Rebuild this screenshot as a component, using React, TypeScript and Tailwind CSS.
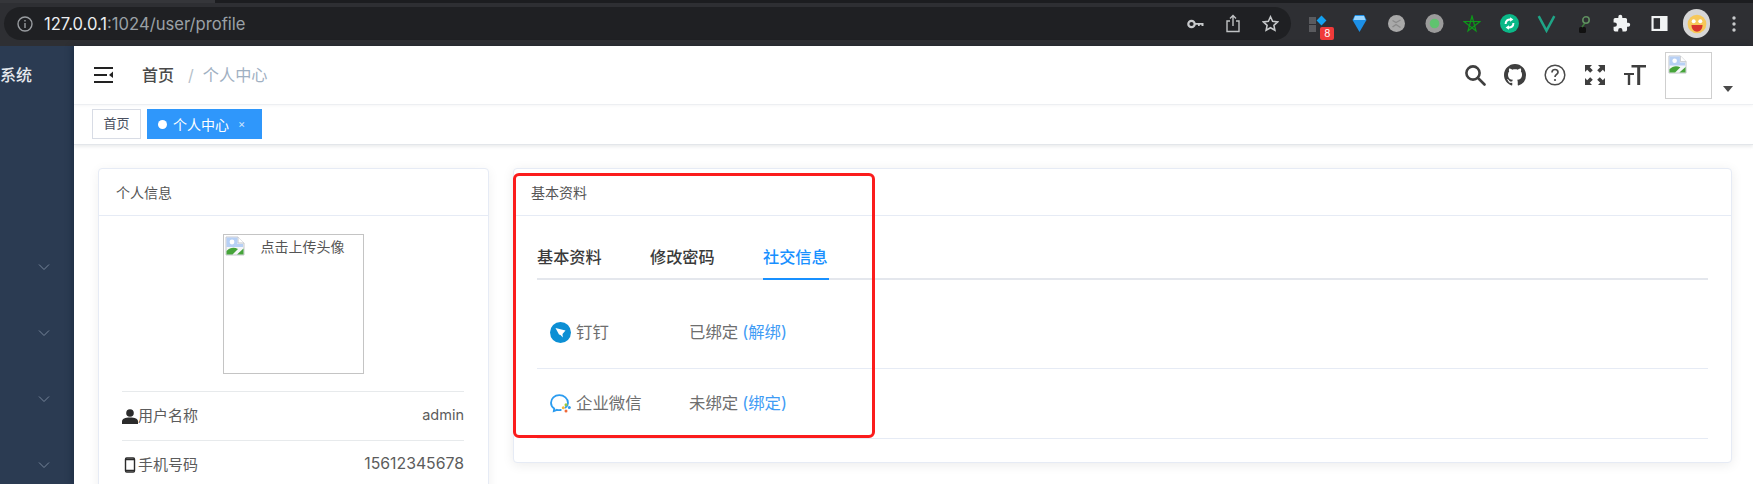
import React from "react";

function Chevron() {
  return (
    <div className="flex h-[66px] items-center justify-end pr-[23px]">
      <svg width="14" height="8" viewBox="0 0 14 8" fill="none" stroke="#76859a" strokeWidth="1">
        <path d="M2 1.5 L7 6.5 L12 1.5" />
      </svg>
    </div>
  );
}

function BrokenImage({ size = 20 }: { size?: number }) {
  return (
    <svg width={size} height={size} viewBox="0 0 20 20">
      <path d="M1 1 H13 L19 7 V19 H1 Z" fill="#f4f6f8" stroke="#c4c7cc" strokeWidth="1" />
      <path d="M13 1 V7 H19" fill="#ffffff" stroke="#c4c7cc" strokeWidth="1" />
      <path d="M1.5 1.5 H12.5 V8 H18 V11 H1.5 Z" fill="#b7d0f5" />
      <circle cx="7" cy="6" r="2.4" fill="#ffffff" />
      <path d="M1.5 18.5 V15 C5 11.5 9 11 13 13 L7.5 18.5 Z" fill="#46a43a" />
      <path d="M12 18.5 L18.5 12.5 V18.5 Z" fill="#46a43a" />
    </svg>
  );
}

function ExtCell({ children }: { children: React.ReactNode }) {
  return <div className="flex h-6 w-[37.5px] shrink-0 items-center justify-center">{children}</div>;
}

function ChromeBar() {
  return (
    <div className="h-[46px] shrink-0 bg-[#2e2f33]">
      <div className="flex h-[3px]">
        <div className="w-[215px] bg-[#35363a]" />
        <div className="flex-1 bg-[#1c1d20]" />
      </div>
      <div className="flex h-[43px] items-center pb-[2px]">
        <div className="ml-[4px] flex h-[33px] w-[1287px] shrink-0 items-center rounded-full bg-[#1f2023] pl-[13px] pr-[12px]">
          <svg width="16" height="16" viewBox="0 0 16 16" fill="none" stroke="#9a9da1" strokeWidth="1.4">
            <circle cx="8" cy="8" r="7" />
            <path d="M8 7 V12 M8 4 V5.6" />
          </svg>
          <div className="ml-[11px] mt-[1px] whitespace-nowrap text-[16.6px] text-[#9aa0a6]">
            <span className="text-[#eceef0]">127.0.0.1</span>:1024/user/profile
          </div>
          <div className="ml-auto flex items-center gap-[21px]">
            <svg width="17" height="12" viewBox="0 0 17 12" fill="none">
              <circle cx="4.5" cy="6" r="3.2" stroke="#c8cacc" strokeWidth="2.2" />
              <path d="M8 5 H16.5 V8 H14.5 V6.8 H12.8 V8 H11 V6.8 H8 Z" fill="#c8cacc" />
            </svg>
            <svg width="16" height="19" viewBox="0 0 16 19" fill="none" stroke="#c0c2c4" strokeWidth="1.4">
              <path d="M5 7 H2 V17.5 H14 V7 H11" />
              <path d="M8 12 V1.5 M5 4.5 L8 1.5 L11 4.5" />
            </svg>
            <svg width="17" height="17" viewBox="0 0 24 24" fill="none" stroke="#c6c8ca" strokeWidth="2.2">
              <path d="M12 2.5 L15 9 L22 9.8 L16.8 14.6 L18.2 21.5 L12 18 L5.8 21.5 L7.2 14.6 L2 9.8 L9 9 Z" />
            </svg>
          </div>
        </div>
        <div className="ml-[12px] flex items-center">
          <ExtCell>
            <div className="relative h-6 w-[25px]">
              <div className="absolute left-0 top-[5px] h-[7px] w-[7px] bg-[#5a5b5f]" />
              <div className="absolute left-0 top-[13px] h-[7px] w-[7px] bg-[#5a5b5f]" />
              <div className="absolute left-[9px] top-[5px] h-[7px] w-[7px] rotate-45 bg-[#13a0f0]" />
              <div className="absolute left-[11px] top-[15px] flex h-[13px] w-[14px] items-center justify-center rounded-[2px] bg-[#f03a3a] text-[10px] leading-none text-white">
                8
              </div>
            </div>
          </ExtCell>
          <ExtCell>
            <svg width="15" height="19" viewBox="0 0 15 19">
              <path d="M3 1 H12 L14.5 6 L7.5 18 L0.5 6 Z" fill="#1c8fe6" />
              <path d="M3 2 H12 L13.5 6 H1.5 Z" fill="#9ad6ff" />
            </svg>
          </ExtCell>
          <ExtCell>
            <svg width="17" height="17" viewBox="0 0 17 17">
              <circle cx="8.5" cy="8.5" r="8.5" fill="#a9a9a9" />
              <path d="M4.5 5.5 L8 7.5 L12.5 5 M4.5 12 L8 9.5 L12.5 12.5" stroke="#8a8a8a" strokeWidth="1.4" fill="none" />
            </svg>
          </ExtCell>
          <ExtCell>
            <svg width="19" height="19" viewBox="0 0 18 19">
              <ellipse cx="9" cy="9.5" rx="9" ry="9.5" fill="#9b9b9b" />
              <circle cx="9" cy="9.5" r="4.8" fill="#5fc36f" />
            </svg>
          </ExtCell>
          <ExtCell>
            <svg width="18" height="18" viewBox="0 0 18 18" fill="none" stroke="#0d9a1a" strokeWidth="1.2">
              <path d="M9 1 L13 16 L1 6.5 H17 L5 16 Z" />
            </svg>
          </ExtCell>
          <ExtCell>
            <svg width="19" height="19" viewBox="0 0 17 17">
              <circle cx="8.5" cy="8.5" r="8.5" fill="#0bb888" />
              <path d="M5 9 C5 6 7 4.5 10 5 M12 8 C12 11 10 12.5 7 12" stroke="#ffffff" strokeWidth="1.8" fill="none" />
              <path d="M9 2.8 L12 5 L9 7 Z M8 10 L5 12 L8 14.2 Z" fill="#ffffff" />
            </svg>
          </ExtCell>
          <ExtCell>
            <svg width="19" height="18" viewBox="0 0 17 16" fill="none" stroke="#1fa587" strokeWidth="2.2">
              <path d="M1.5 1 L8.5 14 L15.5 1" />
            </svg>
          </ExtCell>
          <ExtCell>
            <svg width="12" height="18" viewBox="0 0 12 18">
              <rect x="1" y="12" width="7" height="6" rx="1.5" fill="#111" />
              <path d="M4 12 L7 8" stroke="#3c7a3c" strokeWidth="1.5" />
              <circle cx="8" cy="5" r="3.2" fill="none" stroke="#5f8f5f" strokeWidth="1.6" />
            </svg>
          </ExtCell>
          <ExtCell>
            <svg width="19" height="19" viewBox="0 0 24 24" fill="#f1f3f4">
              <path d="M20.5 11H19V7a2 2 0 0 0-2-2h-4V3.5a2.5 2.5 0 0 0-5 0V5H4a2 2 0 0 0-2 2v3.8h1.5a2.7 2.7 0 0 1 0 5.4H2V20a2 2 0 0 0 2 2h3.8v-1.5a2.7 2.7 0 0 1 5.4 0V22H17a2 2 0 0 0 2-2v-4h1.5a2.5 2.5 0 0 0 0-5z" />
            </svg>
          </ExtCell>
          <ExtCell>
            <svg width="17" height="15" viewBox="0 0 15 14">
              <rect x="0" y="0" width="15" height="14" fill="#f1f3f4" />
              <rect x="2" y="2" width="6" height="10" fill="#2e2f33" />
            </svg>
          </ExtCell>
          <ExtCell>
            <div className="flex h-[29px] w-[27px] shrink-0 items-center justify-center rounded-full bg-[#d6d6d6]">
              <svg width="22" height="22" viewBox="0 0 20 20">
                <circle cx="10" cy="10" r="8.5" fill="#f6c85a" />
                <circle cx="7" cy="7.5" r="1.8" fill="#fff" />
                <circle cx="13" cy="7.5" r="1.8" fill="#fff" />
                <path d="M5 11 H15 C15 15 12.5 17 10 17 C7.5 17 5 15 5 11 Z" fill="#d8342e" />
              </svg>
            </div>
          </ExtCell>
          <ExtCell>
            <svg width="4" height="16" viewBox="0 0 4 16" fill="#c8cacc">
              <circle cx="2" cy="2" r="1.7" />
              <circle cx="2" cy="8" r="1.7" />
              <circle cx="2" cy="14" r="1.7" />
            </svg>
          </ExtCell>
        </div>
      </div>
    </div>
  );
}

function Sidebar() {
  return (
    <div className="w-[74px] shrink-0 overflow-hidden bg-[#2b3b52]">
      <div className="flex h-[58px] items-center text-[16px] font-medium leading-none text-[#e6e9ee]">系统</div>
      <div className="pt-[130px]">
        <Chevron />
        <Chevron />
        <Chevron />
        <Chevron />
      </div>
    </div>
  );
}

function NavBar() {
  return (
    <div className="flex h-[59px] shrink-0 items-center border-b border-[#eef0f3] pl-[20px] shadow-[0_1px_3px_rgba(0,21,41,0.04)]">
      <svg width="20" height="19" viewBox="0 0 20 19" fill="#222">
        <rect x="0" y="1" width="19" height="2" />
        <rect x="0" y="8" width="13" height="2" />
        <rect x="0" y="15" width="19" height="2" />
        <path d="M19 5.5 V12 L15 9 Z" />
      </svg>
      <div className="ml-[28px] text-[16px] font-medium text-[#4a4a4a]">首页</div>
      <div className="ml-[14px] text-[16px] text-[#b6bfca]">/</div>
      <div className="ml-[9px] text-[16.2px] text-[#9fb0c2]">个人中心</div>
      <div className="ml-auto flex items-center pr-[20px]">
        <svg width="22" height="22" viewBox="0 0 22 22" fill="none" stroke="#3f3f3f" strokeWidth="2.6">
          <circle cx="9" cy="9" r="6.6" />
          <path d="M14 14 L20.5 20.5" strokeLinecap="round" />
        </svg>
        <svg width="22" height="22" viewBox="0 0 16 16" fill="#3f3f3f" className="ml-[18px]">
          <path d="M8 0C3.58 0 0 3.58 0 8c0 3.54 2.29 6.53 5.47 7.59.4.07.55-.17.55-.38 0-.19-.01-.82-.01-1.49-2.01.37-2.53-.49-2.69-.94-.09-.23-.48-.94-.82-1.13-.28-.15-.68-.52-.01-.53.63-.01 1.08.58 1.23.82.72 1.21 1.87.87 2.33.66.07-.52.28-.87.51-1.07-1.78-.2-3.64-.89-3.64-3.95 0-.87.31-1.59.82-2.15-.08-.2-.36-1.02.08-2.12 0 0 .67-.21 2.2.82.64-.18 1.32-.27 2-.27.68 0 1.36.09 2 .27 1.53-1.04 2.2-.82 2.2-.82.44 1.1.16 1.92.08 2.12.51.56.82 1.27.82 2.15 0 3.07-1.87 3.75-3.65 3.95.29.25.54.73.54 1.48 0 1.07-.01 1.93-.01 2.2 0 .21.15.46.55.38A8.013 8.013 0 0016 8c0-4.42-3.58-8-8-8z" />
        </svg>
        <svg width="22" height="22" viewBox="0 0 22 22" fill="none" stroke="#4a4a4a" strokeWidth="1.5" className="ml-[18px]">
          <circle cx="11" cy="11" r="9.8" />
          <path d="M8 8.5 C8 6.5 9.5 5.5 11 5.5 C12.8 5.5 14 6.7 14 8.2 C14 10.3 11 10.6 11 13" strokeWidth="1.7" />
          <circle cx="11" cy="16" r="1.1" fill="#4a4a4a" stroke="none" />
        </svg>
        <svg width="20" height="20" viewBox="0 0 20 20" fill="#3f3f3f" className="ml-[19px]">
          <path d="M0 0 H7 L4.8 2.2 L7.8 5.2 L5.2 7.8 L2.2 4.8 L0 7 Z" />
          <path d="M20 0 V7 L17.8 4.8 L14.8 7.8 L12.2 5.2 L15.2 2.2 L13 0 Z" />
          <path d="M0 20 V13 L2.2 15.2 L5.2 12.2 L7.8 14.8 L4.8 17.8 L7 20 Z" />
          <path d="M20 20 H13 L15.2 17.8 L12.2 14.8 L14.8 12.2 L17.8 15.2 L20 13 Z" />
        </svg>
        <svg width="22" height="22" viewBox="0 0 22 22" fill="#3f3f3f" className="ml-[19px]">
          <path d="M7.5 1 H22 V3.6 H16.2 V21 H13.2 V3.6 H7.5 Z" />
          <path d="M0 9 H10 V11 H6.2 V21 H3.8 V11 H0 Z" />
        </svg>
        <div className="ml-[19px] h-[47px] w-[47px] shrink-0 border border-[#cfcfcf] p-[2px]">
          <BrokenImage size={19} />
        </div>
        <svg width="10" height="6" viewBox="0 0 10 6" fill="#4a4a4a" className="ml-[11px] mt-[28px]">
          <path d="M0 0 H10 L5 6 Z" />
        </svg>
      </div>
    </div>
  );
}

function TagBar() {
  return (
    <div className="flex h-[40px] shrink-0 items-start gap-[6px] border-b border-[#e3e6ea] pl-[18px] pt-[4px] shadow-[0_2px_3px_rgba(0,21,41,0.08)]">
      <div className="flex h-[30px] w-[49px] items-center justify-center border border-[#d8dce5] text-[13px] text-[#495060]">首页</div>
      <div className="flex h-[30px] w-[115px] items-center bg-[#2f97fb] pl-[11px] text-[14px] text-white">
        <span className="h-[9px] w-[9px] rounded-full bg-white" />
        <span className="ml-[6px]">个人中心</span>
        <span className="ml-[9px] text-[11px] leading-none text-[#cfe6fd]">×</span>
      </div>
    </div>
  );
}

function CardHeader({ title }: { title: string }) {
  return (
    <div className="flex h-[46px] items-center text-[14px] text-[#555]">{title}</div>
  );
}

function InfoRow({ icon, label, value, valueClass }: { icon: React.ReactNode; label: string; value: string; valueClass: string }) {
  return (
    <div className="flex h-[49px] items-center justify-between border-t border-[#e7eaec] text-[#5c5c5c]">
      <div className="flex items-center text-[15px]">
        {icon}
        <span>{label}</span>
      </div>
      <span className={`-mt-[2px] ${valueClass}`}>{value}</span>
    </div>
  );
}

function ProfileCard() {
  return (
    <div className="h-[400px] w-[391px] shrink-0 rounded-[4px] border border-[#e6ebf5] bg-white shadow-[0_2px_12px_rgba(0,0,0,0.06)]">
      <div className="pl-[17px]">
        <CardHeader title="个人信息" />
      </div>
      <div className="border-t border-[#e6ebf5] pl-[23px] pr-[24px] pt-[18px]">
        <div className="mx-auto h-[140px] w-[141px] border border-[#c4c4c4]">
          <div className="flex items-start">
            <div className="ml-[1px] mt-[1px]">
              <BrokenImage size={20} />
            </div>
            <span className="ml-[16px] mt-[2px] whitespace-nowrap text-[14px] leading-[20px] text-[#555]">点击上传头像</span>
          </div>
        </div>
        <div className="mt-[17px]">
          <InfoRow
            label="用户名称"
            value="admin"
            valueClass="text-[14.5px]"
            icon={
              <svg width="16" height="15" viewBox="0 0 16 15" fill="#2b2b2b">
                <circle cx="8" cy="4" r="3.8" />
                <path d="M0 15 V12.5 C0 10 3 8.6 8 8.6 C13 8.6 16 10 16 12.5 V15 Z" />
              </svg>
            }
          />
          <InfoRow
            label="手机号码"
            value="15612345678"
            valueClass="text-[15.8px]"
            icon={
              <svg width="16" height="16" viewBox="0 0 16 16" fill="none" stroke="#2b2b2b" strokeWidth="1.4">
                <rect x="3.5" y="1" width="9" height="14" rx="1.2" />
                <path d="M3.5 13.5 H12.5 M3.5 2.5 H12.5" strokeWidth="1.6" />
              </svg>
            }
          />
        </div>
      </div>
    </div>
  );
}

function DingIcon() {
  return (
    <svg width="21" height="21" viewBox="0 0 21 21" className="shrink-0">
      <circle cx="10.5" cy="10.5" r="10.5" fill="#0c8fd4" />
      <path d="M5.5 6 L15.5 8.5 L12.5 12 L12.8 15.5 L10.5 13 L9 12.5 Z" fill="#ffffff" />
    </svg>
  );
}

function WeComIcon() {
  return (
    <svg width="21" height="19" viewBox="0 0 21 19" fill="none" className="shrink-0">
      <path d="M15.5 13.5 C17.5 12 18 10 18 9 C18 4.5 14 1.2 9.3 1.2 C4.6 1.2 1 4.6 1 8.8 C1 11.2 2.2 13.3 4.2 14.6 L3.8 17 L7 15.8 C8.2 16.1 9.5 16.2 10.8 16" stroke="#2c9cf0" strokeWidth="1.8" strokeLinecap="round" />
      <circle cx="16" cy="10.8" r="1.5" fill="#9ac83f" />
      <circle cx="19.3" cy="13.5" r="1.5" fill="#2c9cf0" />
      <circle cx="13.3" cy="13.8" r="1.5" fill="#f4b93b" />
      <circle cx="16" cy="17" r="1.5" fill="#ef6a3a" />
    </svg>
  );
}

function SocialRow({ icon, name, status, action, className }: { icon: React.ReactNode; name: string; status: string; action: string; className: string }) {
  return (
    <div className={`flex items-center border-b border-[#e6ebf5] pl-[13px] text-[16.4px] text-[#6e6e6e] ${className}`}>
      <div className="flex w-[139px] items-center gap-[5px]">
        {icon}
        <span>{name}</span>
      </div>
      <span>{status}</span>
      <span className="ml-[4px] text-[#3f9cf5]">{action}</span>
    </div>
  );
}

function AccountCard() {
  return (
    <div className="relative h-[295px] flex-1 rounded-[4px] border border-[#e6ebf5] bg-white shadow-[0_2px_12px_rgba(0,0,0,0.08)]">
      <div className="pl-[17px]">
        <CardHeader title="基本资料" />
      </div>
      <div className="border-t border-[#e6ebf5] px-[23px] pt-[24px]">
        <div className="flex h-[40px] gap-[48px] border-b-2 border-[#e4e7ed] text-[16.2px] font-medium text-[#3a3a3a]">
          <div className="h-[40px] w-[65px] leading-[34px]">基本资料</div>
          <div className="h-[40px] w-[65px] leading-[34px]">修改密码</div>
          <div className="-mr-[1px] h-[40px] w-[66px] border-b-2 border-[#1890ff] leading-[34px] text-[#1890ff]">社交信息</div>
        </div>
        <div className="pt-[17px]">
          <SocialRow icon={<DingIcon />} name="钉钉" status="已绑定" action="(解绑)" className="h-[72px]" />
          <SocialRow icon={<WeComIcon />} name="企业微信" status="未绑定" action="(绑定)" className="h-[70px]" />
        </div>
      </div>
      <div className="absolute -left-px top-[4px] h-[265px] w-[362px] rounded-[6px] border-[3px] border-[#fb1c1c]" />
    </div>
  );
}

export default function App() {
  return (
    <div className="flex h-[484px] w-[1753px] flex-col overflow-hidden bg-white font-['Inter','Noto_Sans_CJK_SC',sans-serif]">
      <ChromeBar />
      <div className="flex min-h-0 flex-1">
        <Sidebar />
        <div className="relative flex min-w-0 flex-1 flex-col shadow-[-3px_0_6px_rgba(0,21,41,0.25)]">
          <NavBar />
          <TagBar />
          <div className="flex items-start gap-[24px] pl-[24px] pr-[21px] pt-[23px]">
            <ProfileCard />
            <AccountCard />
          </div>
        </div>
      </div>
    </div>
  );
}
